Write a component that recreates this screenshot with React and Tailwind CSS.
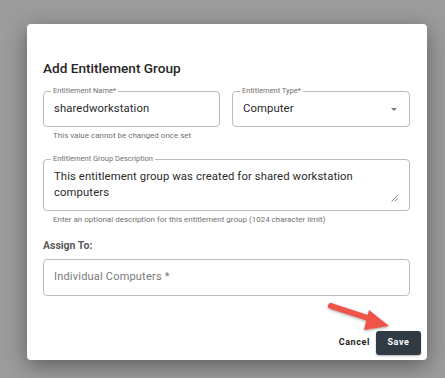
export default function App() {
  const font = { fontFamily: "Roboto, 'Noto Sans', sans-serif" };
  return (
    <div className="w-[445px] h-[378px] bg-[#9c9c9c] overflow-hidden relative" style={font}>
      <div className="ml-[27px] mt-[24px] w-[400px] h-[336px] bg-white rounded-[4px] shadow-[0_6px_22px_rgba(0,0,0,0.4)] flex flex-col">
        <div className="pl-[16px] pr-[17px] pt-[36px]">
          <h2 className="text-[13.6px] leading-[16px] font-medium text-[#262626]">Add Entitlement Group</h2>
          <div className="grid grid-cols-[177px_178px] gap-[12px] mt-[15px]">
            <div>
              <div className="relative h-[36px] border border-[#bcbcbc] rounded-[4px] flex items-center pl-[10px]">
                <span className="absolute left-[7px] -top-[6px] px-[2px] bg-white text-[7.5px] leading-[10px] text-[#707070]">Entitlement Name*</span>
                <span className="text-[11.3px] text-[#2a2a2a] tracking-[0.1px]">sharedworkstation</span>
              </div>
              <div className="mt-[4px] pl-[10px] text-[8px] leading-[10px] text-[#707070]">This value cannot be changed once set</div>
            </div>
            <div>
              <div className="relative h-[36px] border border-[#bcbcbc] rounded-[4px] flex items-center pl-[10px] pr-[12px] justify-between">
                <span className="absolute left-[7px] -top-[6px] px-[2px] bg-white text-[7.5px] leading-[10px] text-[#707070]">Entitlement Type*</span>
                <span className="text-[11.3px] text-[#2a2a2a] tracking-[0.1px]">Computer</span>
                <svg width="6" height="3" viewBox="0 0 6 3"><path d="M0 0 L6 0 L3 3 Z" fill="#777" /></svg>
              </div>
            </div>
          </div>
          <div className="relative mt-[18px] h-[52px] border border-[#bcbcbc] rounded-[4px] pl-[10px] pt-[9px] pr-[20px]">
            <span className="absolute left-[7px] -top-[6px] px-[2px] bg-white text-[7.5px] leading-[10px] text-[#707070]">Entitlement Group Description</span>
            <p className="text-[11.3px] leading-[16px] text-[#2a2a2a] tracking-[0.1px]">This entitlement group was created for shared workstation computers</p>
            <svg className="absolute right-[11px] bottom-[8px]" width="7" height="7" viewBox="0 0 7 7">
              <path d="M0.5 6.5 L6.5 0.5 M3.5 6.5 L6.5 3.5" stroke="#777" strokeWidth="0.9" />
            </svg>
          </div>
          <div className="mt-[4px] pl-[10px] text-[8px] leading-[10px] text-[#707070]">Enter an optional description for this entitlement group (1024 character limit)</div>
          <div className="mt-[14px] text-[10.5px] leading-[13px] font-bold text-[#5a5a5a]">Assign To:</div>
          <div className="mt-[7px] h-[37px] border border-[#bcbcbc] rounded-[4px] flex items-center pl-[10px]">
            <span className="text-[11px] text-[#7a7a7a] tracking-[0.2px]">Individual Computers *</span>
          </div>
        </div>
        <div className="mt-[35px] flex justify-end items-center pr-[6px] gap-[6px]">
          <button className="text-[9px] font-bold tracking-[0.6px] text-[#222]">Cancel</button>
          <button className="w-[45px] h-[24px] bg-[#2f3a44] rounded-[3px] text-white text-[9px] font-bold tracking-[0.6px] shadow-[0_1px_2px_rgba(0,0,0,0.3)]">Save</button>
        </div>
      </div>
      <svg className="absolute left-[320px] top-[295px]" width="80" height="40" viewBox="320 295 80 40" style={{ filter: "drop-shadow(0 1px 1.5px rgba(0,0,0,0.35))" }}>
        <line x1="331" y1="306" x2="371" y2="319" stroke="#f05448" strokeWidth="6" strokeLinecap="round" />
        <polygon points="369,310 389,326 364,330" fill="#f05448" />
      </svg>
    </div>
  );
}
